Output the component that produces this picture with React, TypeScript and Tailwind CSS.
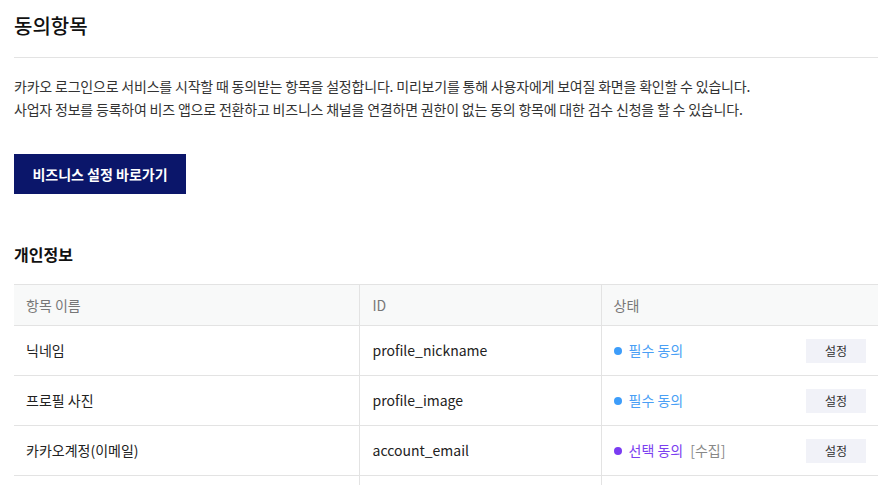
import React from "react";

const rows = [
  { name: "닉네임", id: "profile_nickname", type: "req" },
  { name: "프로필 사진", id: "profile_image", type: "req" },
  { name: "카카오계정(이메일)", id: "account_email", type: "opt" },
];

function Status({ type }: { type: string }) {
  if (type === "req")
    return (
      <span className="flex items-center">
        <span className="mr-[7px] inline-block h-[8px] w-[8px] rounded-full bg-[#3d9dfa]" />
        <span className="text-[#4a9ff5]">필수 동의</span>
      </span>
    );
  return (
    <span className="flex items-center">
      <span className="mr-[7px] inline-block h-[8px] w-[8px] rounded-full bg-[#7a3cf2]" />
      <span className="text-[#7b3ff0]">선택 동의</span>
      <span className="ml-[7px] text-[#888]">[수집]</span>
    </span>
  );
}

export default function App() {
  return (
    <div
      className="bg-white pl-[14px] pr-[6px] text-[#222]"
      style={{ fontFamily: '"Noto Sans CJK KR", "Noto Sans", sans-serif' }}
    >
      <div className="border-b border-[#e3e3e3] pt-[11px] pb-[16px]">
        <h1 className="text-[20px] font-medium leading-[30px] text-[#111]">동의항목</h1>
      </div>
      <div className="mt-[17px] text-[14px] leading-[23px] tracking-[-0.2px] text-[#333]">
        <p>카카오 로그인으로 서비스를 시작할 때 동의받는 항목을 설정합니다. 미리보기를 통해 사용자에게 보여질 화면을 확인할 수 있습니다.</p>
        <p>사업자 정보를 등록하여 비즈 앱으로 전환하고 비즈니스 채널을 연결하면 권한이 없는 동의 항목에 대한 검수 신청을 할 수 있습니다.</p>
      </div>
      <button className="mt-[33px] flex h-[40px] w-[172px] items-center justify-center bg-[#0b166a] text-[14px] font-bold text-white">
        비즈니스 설정 바로가기
      </button>
      <h2 className="mt-[48px] text-[16px] font-bold leading-[24px] text-[#111]">개인정보</h2>
      <table className="mt-[18px] w-full border-collapse text-[14px]">
        <thead>
          <tr className="h-[41px] border-y border-[#e3e3e3] bg-[#f8f9f9] text-left text-[#777]">
            <th className="w-[345px] pl-[12px] font-normal">항목 이름</th>
            <th className="w-[242px] border-l border-[#e3e3e3] pl-[13px] font-normal">ID</th>
            <th className="border-l border-[#e3e3e3] pl-[12px] font-normal">상태</th>
          </tr>
        </thead>
        <tbody>
          {rows.map((r) => (
            <tr key={r.id} className="h-[50px] border-b border-[#e3e3e3] text-[#222]">
              <td className="pl-[12px]">{r.name}</td>
              <td className="border-l border-[#e3e3e3] pl-[13px]">{r.id}</td>
              <td className="border-l border-[#e3e3e3] pl-[12px] pr-[12px]">
                <div className="flex items-center justify-between">
                  <Status type={r.type} />
                  <button className="h-[24px] w-[60px] bg-[#f1f2f8] text-[12px] text-[#333]">설정</button>
                </div>
              </td>
            </tr>
          ))}
          <tr className="h-[50px] border-b border-[#e3e3e3]">
            <td className="pl-[12px]"></td>
            <td className="border-l border-[#e3e3e3]"></td>
            <td className="border-l border-[#e3e3e3]"></td>
          </tr>
        </tbody>
      </table>
    </div>
  );
}
